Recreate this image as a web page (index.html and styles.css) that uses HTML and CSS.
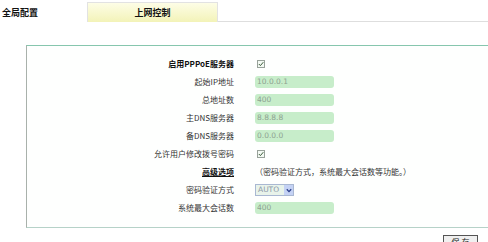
FILE: index.html
```html
<!DOCTYPE html>
<html>
<head>
<meta charset="utf-8">
<link rel="stylesheet" href="styles.css">
</head>
<body>
<div class="tabs">
  <div class="tab tab-current">全局配置</div>
  <div class="tab tab-other">上网控制</div>
  <div class="tab-fill"></div>
</div>
<div class="panel">
  <div class="form">
    <div class="label strong">启用PPPoE服务器</div>
    <div class="value"><span class="check"><svg width="6" height="6" viewBox="0 0 6 6"><path d="M0.8 3 L2.4 4.6 L5.3 1.2" fill="none" stroke="#3a5a3a" stroke-width="1"/></svg></span></div>

    <div class="label">起始IP地址</div>
    <div class="value"><span class="field">10.0.0.1</span></div>

    <div class="label">总地址数</div>
    <div class="value"><span class="field">400</span></div>

    <div class="label">主DNS服务器</div>
    <div class="value"><span class="field">8.8.8.8</span></div>

    <div class="label">备DNS服务器</div>
    <div class="value"><span class="field">0.0.0.0</span></div>

    <div class="label">允许用户修改拨号密码</div>
    <div class="value"><span class="check"><svg width="6" height="6" viewBox="0 0 6 6"><path d="M0.8 3 L2.4 4.6 L5.3 1.2" fill="none" stroke="#3a5a3a" stroke-width="1"/></svg></span></div>

    <div class="label strong underline">高级选项</div>
    <div class="value note">（密码验证方式，系统最大会话数等功能。）</div>

    <div class="label">密码验证方式</div>
    <div class="value"><span class="select"><span class="select-text">AUTO</span><span class="select-btn"><svg width="6" height="5" viewBox="0 0 6 5"><path d="M0.8 1.2 L3 3.6 L5.2 1.2" fill="none" stroke="#2a3e8a" stroke-width="1.3"/></svg></span></span></div>

    <div class="label">系统最大会话数</div>
    <div class="value"><span class="field">400</span></div>
  </div>
</div>
<div class="actions">
  <span class="btn">保 存</span>
</div>
</body>
</html>
```

FILE: styles.css
```css
html, body {
  margin: 0;
  padding: 0;
  background: #ffffff;
}
body {
  font-family: "Noto Sans CJK SC", "DejaVu Sans", sans-serif;
  font-size: 8px;
  color: #222;
  width: 488px;
  height: 242px;
  overflow: hidden;
}
.tabs {
  display: flex;
  margin-top: 2px;
  height: 20px;
}
.tab {
  font-size: 9px;
  font-weight: bold;
  line-height: 19px;
  color: #111;
}
.tab-current {
  width: 85px;
  padding-left: 2px;
  line-height: 21px;
}
.tab-other {
  width: 129px;
  text-align: center;
  border: 1px solid #e2e2e2;
  border-bottom: none;
  background: linear-gradient(#fdfde6, #f3f3b8);
}
.tab-fill {
  flex: 1;
  border-bottom: 1px solid #dedede;
  height: 19px;
}
.panel {
  margin-top: 23px;
  margin-left: 26px;
  border-top: 1px solid #86c6ae;
  border-left: 1px solid #a9b1ab;
  border-bottom: 1px solid #b6d2c8;
  padding: 9px 0 10px 0;
  background: #fefffe;
}
.form {
  display: grid;
  grid-template-columns: 207px 1fr;
  column-gap: 21px;
  grid-auto-rows: 18px;
}
.label {
  text-align: right;
  line-height: 18px;
  color: #333;
  white-space: nowrap;
}
.strong {
  font-weight: bold;
  color: #111;
}
.underline {
  text-decoration: underline;
}
.value {
  display: flex;
  align-items: center;
  line-height: 18px;
}
.note {
  color: #333;
}
.field {
  display: block;
  width: 77px;
  height: 12px;
  line-height: 12px;
  padding-left: 2px;
  border-radius: 3px;
  background: #c7edca;
  color: #8ea291;
  font-family: "DejaVu Sans", sans-serif;
  font-size: 7.5px;
}
.check {
  display: flex;
  align-items: center;
  justify-content: center;
  width: 6px;
  height: 6px;
  margin-left: 2px;
  border: 1px solid #98a29a;
  background: #f3f9f3;
}
.select {
  display: flex;
  width: 37px;
  height: 10px;
  border: 1px solid #a9b8d2;
  background: #e8f3ea;
}
.select-text {
  flex: 1;
  padding-left: 2px;
  line-height: 10px;
  color: #8a98a8;
  font-family: "DejaVu Sans", sans-serif;
  font-size: 7.5px;
}
.select-btn {
  width: 9px;
  display: flex;
  align-items: center;
  justify-content: center;
  background: #c4d2f4;
}
.actions {
  display: flex;
  justify-content: flex-end;
  padding-right: 10px;
  margin-top: 7px;
}
.btn {
  display: block;
  width: 33px;
  height: 12px;
  border: 1px solid #555;
  background: #f0f0f0;
  text-align: center;
  line-height: 11px;
  font-size: 8px;
  color: #222;
}
```
